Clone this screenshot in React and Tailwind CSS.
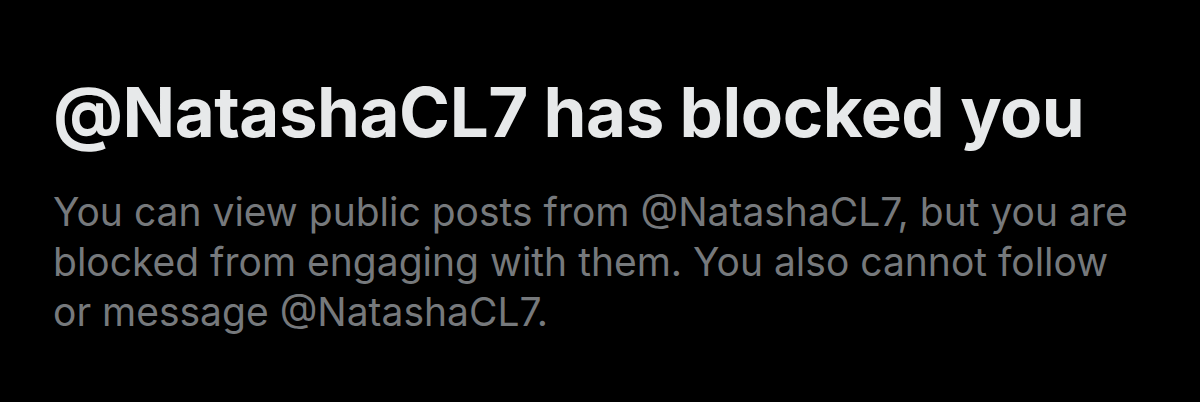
import React from "react";

const App = () => {
  const handle = "@NatashaCL7";

  return (
    <div className="w-[1200px] h-[402px] bg-black overflow-hidden font-['Inter',sans-serif]">
      <div className="pl-[53px] pt-[72px]">
        <h1 className="text-[69px] leading-[80px] font-bold text-[#e7e9ea] tracking-[-0.5px]">
          {handle} has blocked you
        </h1>
        <p className="mt-[35px] text-[39px] leading-[50px] text-[#76797c] whitespace-nowrap">
          You can view public posts from {handle}, but you are
          <br />
          blocked from engaging with them. You also cannot follow
          <br />
          or message {handle}.
        </p>
      </div>
    </div>
  );
};

export default App;
